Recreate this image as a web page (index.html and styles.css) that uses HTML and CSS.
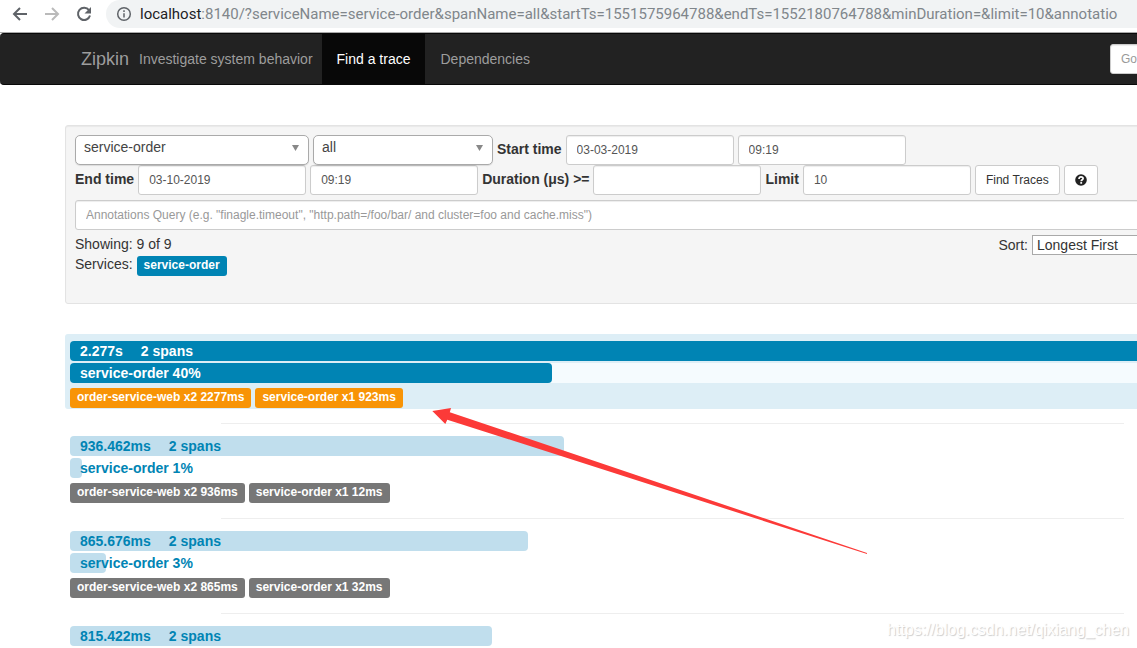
FILE: index.html
```html
<!DOCTYPE html>
<html lang="en">
<head>
<meta charset="utf-8">
<title>Zipkin - Find a trace</title>
<link rel="stylesheet" href="styles.css">
</head>
<body>
<header class="browser">
  <button class="browser-button" type="button" aria-label="Back">
    <svg viewBox="0 0 16 16"><path d="M15 8H2M8 2L2 8l6 6"/></svg>
  </button>
  <button class="browser-button disabled" type="button" aria-label="Forward">
    <svg viewBox="0 0 16 16"><path d="M1 8h13M8 2l6 6-6 6"/></svg>
  </button>
  <button class="browser-button" type="button" aria-label="Reload">
    <svg viewBox="0 0 16 16"><path d="M13 4.2A6.1 6.1 0 1 0 14 9.5"/><path class="solid" d="M15 1v6.5H8.5z"/></svg>
  </button>
  <div class="address">
    <svg class="info" viewBox="0 0 16 16"><circle cx="8" cy="8" r="6.3"/><path d="M8 7.2v4.3M8 4.3v1.8"/></svg>
    <span class="url"><span class="host">localhost</span>:8140/?serviceName=service-order&amp;spanName=all&amp;startTs=1551575964788&amp;endTs=1552180764788&amp;minDuration=&amp;limit=10&amp;annotatio</span>
  </div>
</header>

<nav class="navbar">
  <a class="brand" href="#">Zipkin</a>
  <span class="tagline">Investigate system behavior</span>
  <a class="nav-link active" href="#">Find a trace</a>
  <a class="nav-link" href="#">Dependencies</a>
  <input class="field trace-id" type="text" placeholder="Go to trace" aria-label="Go to trace">
</nav>

<main class="container">
  <form class="panel">
    <div class="form-row">
      <div class="chosen chosen-service">
        <select aria-label="Service"><option>service-order</option></select>
      </div>
      <div class="chosen chosen-span">
        <select aria-label="Span"><option>all</option></select>
      </div>
      <label class="field-label" for="start-date">Start time</label>
      <input class="field" id="start-date" type="text" value="03-03-2019">
      <input class="field" type="text" value="09:19" aria-label="Start hour">
    </div>
    <div class="form-row">
      <label class="field-label" for="end-date">End time</label>
      <input class="field" id="end-date" type="text" value="03-10-2019">
      <input class="field" type="text" value="09:19" aria-label="End hour">
      <label class="field-label" for="duration">Duration (μs) &gt;=</label>
      <input class="field" id="duration" type="text">
      <label class="field-label" for="limit">Limit</label>
      <input class="field" id="limit" type="text" value="10">
      <button class="button" type="button">Find Traces</button>
      <button class="button" type="button" aria-label="Help">
        <svg class="help" viewBox="0 0 12 12"><circle cx="6" cy="6" r="5.8"/><path d="M4 4.9C4 3.4 4.8 2.8 6 2.8s2.1.7 2.1 1.7C8.1 5.7 6.2 5.7 6.2 7.2"/><path d="M5.3 8.9h1.8"/></svg>
      </button>
    </div>
    <input class="field query" type="text" aria-label="Annotations query" placeholder="Annotations Query (e.g. &quot;finagle.timeout&quot;, &quot;http.path=/foo/bar/ and cluster=foo and cache.miss&quot;)">
    <div class="summary">
      <div>
        <div>Showing: 9 of 9</div>
        <div class="services">Services: <span class="tag tag-service">service-order</span></div>
      </div>
      <div class="sort">
        <label for="sort">Sort:</label>
        <select id="sort"><option>Longest First</option></select>
      </div>
    </div>
  </form>

  <ul class="traces">
    <li class="trace selected">
      <div class="track"><div class="bar" style="width:100%"><span>2.277s</span><span>2 spans</span></div></div>
      <div class="track"><div class="bar" style="width:40%">service-order 40%</div></div>
      <div class="tags"><span class="tag">order-service-web x2 2277ms</span><span class="tag">service-order x1 923ms</span></div>
    </li>
    <li class="divider"></li>
    <li class="trace">
      <div class="track"><div class="bar" style="width:41%"><span>936.462ms</span><span>2 spans</span></div></div>
      <div class="track"><div class="bar" style="width:1%">service-order 1%</div></div>
      <div class="tags"><span class="tag">order-service-web x2 936ms</span><span class="tag">service-order x1 12ms</span></div>
    </li>
    <li class="divider"></li>
    <li class="trace">
      <div class="track"><div class="bar" style="width:38%"><span>865.676ms</span><span>2 spans</span></div></div>
      <div class="track"><div class="bar" style="width:3%">service-order 3%</div></div>
      <div class="tags"><span class="tag">order-service-web x2 865ms</span><span class="tag">service-order x1 32ms</span></div>
    </li>
    <li class="divider"></li>
    <li class="trace">
      <div class="track"><div class="bar" style="width:35%"><span>815.422ms</span><span>2 spans</span></div></div>
    </li>
  </ul>
</main>

<svg class="pointer" viewBox="0 0 436 147" aria-hidden="true"><path d="M.3 4L19 1l-1.2 4.2L435 146v1L15.3 12.7 13.3 17z"/></svg>
<div class="watermark">https://blog.csdn.net/qixiang_chen</div>
</body>
</html>
```

FILE: styles.css
```css
* {
  box-sizing: border-box;
}

html,
body {
  height: 100%;
}

body {
  position: relative;
  margin: 0;
  overflow: hidden;
  background: #fff;
  color: #333;
  font: 14px/20px "Liberation Sans", Arial, sans-serif;
}

input,
select,
button {
  margin: 0;
  font-family: inherit;
}

/* Browser toolbar */
.browser {
  display: flex;
  align-items: flex-start;
  gap: 16px;
  height: 33px;
  padding-left: 12px;
  border-bottom: 1px solid #a9a9a9;
}

.browser-button {
  width: 16px;
  height: 28px;
  padding: 0;
  border: 0;
  background: none;
  color: #5f6368;
}

.browser-button.disabled {
  color: #bababa;
}

.browser-button svg,
.info {
  display: block;
  flex: none;
  width: 16px;
  height: 16px;
  fill: none;
  stroke: currentColor;
  stroke-width: 2;
}

.browser-button .solid {
  fill: currentColor;
  stroke: none;
}

.address {
  display: flex;
  flex: 1;
  align-items: center;
  gap: 8px;
  min-width: 0;
  height: 28px;
  margin-left: -2px;
  padding-left: 10px;
  overflow: hidden;
  border-radius: 14px 0 0 14px;
  background: #f1f3f4;
  color: #80868b;
  font: 15px/28px Roboto, "Noto Sans", sans-serif;
  white-space: nowrap;
}

.info {
  color: #5f6368;
  stroke-width: 1.5;
}

.host {
  color: #202124;
}

/* Site navigation */
.navbar {
  display: flex;
  align-items: center;
  height: 52px;
  margin-right: -143px;
  padding: 0 15px 0 81px;
  border: 1px solid #080808;
  border-width: 1px 0;
  border-radius: 4px;
  background: #222;
  color: #9d9d9d;
}

.navbar a {
  color: inherit;
  text-decoration: none;
}

.brand {
  margin-right: 10px;
  font-size: 18px;
}

.nav-link {
  padding: 15px;
}

.navbar .active {
  background: #080808;
  color: #fff;
}

.tagline {
  margin-right: 9px;
}

.trace-id {
  margin-left: auto;
}

.navbar .trace-id {
  width: 155px;
}

/* Search form */
.container {
  margin: 40px -143px 0 65px;
}

.panel {
  min-height: 179px;
  padding: 9px;
  border: 1px solid #e3e3e3;
  border-radius: 3px;
  background: #f5f5f5;
  box-shadow: inset 0 1px 1px rgba(0, 0, 0, .05);
}

.form-row {
  display: flex;
  align-items: center;
  gap: 4px;
}

.field-label {
  padding-bottom: 2px;
  font-weight: bold;
  white-space: nowrap;
}

.field {
  width: 168px;
  height: 30px;
  padding: 0 10px;
  border: 1px solid #ccc;
  border-radius: 3px;
  background: #fff;
  box-shadow: inset 0 1px 1px rgba(0, 0, 0, .075);
  color: #555;
  font-size: 12px;
}

.field::placeholder {
  color: #999;
}

.query {
  display: block;
  width: 100%;
  margin: 5px 0 4px;
}

.chosen {
  position: relative;
}

.chosen-service {
  width: 234px;
}

.chosen-span {
  width: 180px;
}

.chosen select {
  display: block;
  appearance: none;
  width: 100%;
  height: 30px;
  padding: 0 8px 6px;
  border: 1px solid #aaa;
  border-radius: 5px;
  background: #fff;
  box-shadow: 0 1px 1px rgba(0, 0, 0, .1);
  color: #444;
  font-size: 14px;
}

.chosen::after {
  position: absolute;
  top: 10px;
  right: 10px;
  width: 7px;
  height: 6px;
  background: #888;
  clip-path: polygon(0 0, 100% 0, 50% 100%);
  content: "";
}

.button {
  height: 30px;
  padding: 0 10px;
  border: 1px solid #ccc;
  border-radius: 3px;
  background: #fff;
  color: #333;
  font-size: 12px;
}

.help {
  display: block;
  width: 12px;
  height: 12px;
  fill: #222;
}

.help path {
  fill: none;
  stroke: #fff;
  stroke-width: 1.7;
}

.summary {
  display: flex;
  justify-content: space-between;
}

.sort {
  display: flex;
  align-items: flex-start;
  gap: 4px;
  padding-top: 1px;
}

.sort select {
  appearance: none;
  width: 238px;
  height: 20px;
  padding: 0 4px;
  border: 1px solid #a9a9a9;
  border-radius: 0;
  background: #fff;
  color: #333;
  font-size: 14px;
}

/* Labels */
.tag {
  display: inline-block;
  height: 20px;
  padding: 0 7px;
  border-radius: 3px;
  background: #777;
  color: #fff;
  font-size: 12px;
  font-weight: bold;
  line-height: 18px;
}

.tag-service {
  background: #0084b4;
}

.services {
  display: flex;
  gap: 4px;
}

.services .tag {
  margin-top: 2px;
}

/* Trace list */
.traces {
  margin: 30px 0 0;
  padding: 0 5px;
  list-style: none;
}

.trace {
  margin: 0 -5px;
  padding: 7px 5px 1px;
  border-radius: 3px;
}

.track {
  margin-bottom: 2px;
  border-radius: 4px;
}

.bar {
  display: flex;
  gap: 18px;
  height: 20px;
  padding-left: 10px;
  border-radius: 4px;
  background: #c0deed;
  color: #0084b4;
  font-weight: bold;
  white-space: nowrap;
}

.tags {
  display: flex;
  gap: 4px;
  padding-top: 3px;
}

.selected {
  background: #ddeef6;
}

.selected .track {
  background: #f5fbfe;
}

.selected .bar {
  background: #0084b4;
  color: #fff;
}

.selected .tag {
  background: #f89406;
}

.divider {
  width: 75%;
  height: 1px;
  margin: 14px auto 5px;
  background: #eee;
}

/* Overlays */
.pointer {
  position: absolute;
  top: 407px;
  left: 432px;
  width: 436px;
  height: 147px;
  fill: #fc3a38;
}

.watermark {
  position: absolute;
  right: 8px;
  bottom: 8px;
  color: #fff;
  font-size: 16px;
  text-shadow: 1px 1px 1px #ccc;
}
```
